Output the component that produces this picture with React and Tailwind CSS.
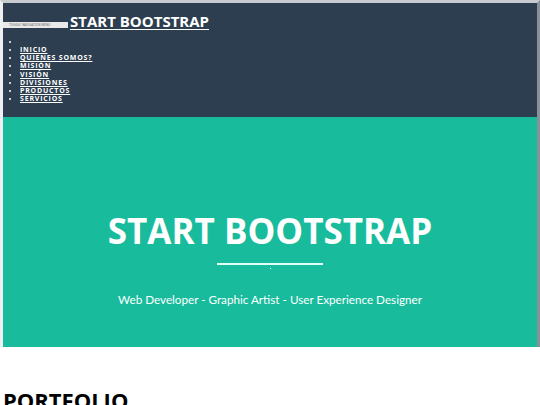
import React from "react";

const links = ["Inicio", "Quienes somos?", "Misión", "Visión", "Divisiones", "Productos", "Servicios"];

export default function App() {
  const heading = { fontFamily: '"Open Sans", "Noto Sans", sans-serif' };

  return (
    <div className="min-h-screen bg-white">
      <div className="border-t-[3px] border-l-[3px] border-r-[3px] border-t-[#c8cbcf] border-l-[#eef0f2] border-r-[#8a9099]">
        <nav className="h-[114px] bg-[#2c3e50] text-white" style={heading}>
          <div className="flex items-end pt-[11px]">
            <button className="mb-[1px] h-[6px] w-[65px] overflow-hidden bg-[#e9e9e9] px-[6px] text-left text-[3px] leading-[6px] tracking-wide text-[#555] uppercase">
              Toggle navigation menu
            </button>
            <a href="#" className="ml-[2px] text-[15px] font-bold leading-none text-white underline underline-offset-2">
              START BOOTSTRAP
            </a>
          </div>
          <ul className="mt-[9px] list-disc pl-[17px] text-[7px] font-bold uppercase leading-[8.2px] tracking-[0.8px] marker:text-[6px]">
            <li className="h-[8px]"></li>
            {links.map((l) => (
              <li key={l}>
                <a href="#" className="underline underline-offset-1">{l}</a>
              </li>
            ))}
          </ul>
        </nav>
        <header className="flex h-[230px] flex-col items-center bg-[#18bc9c] pt-[96px] text-white">
          <h1 className="text-[35px] font-bold leading-none" style={heading}>
            START BOOTSTRAP
          </h1>
          <div className="relative mt-[15px] h-[2px] w-[106px] bg-[#e6fff9]">
            <span className="absolute left-[53px] top-[5px] h-[1px] w-[1px] bg-[#e6fff9]"></span>
          </div>
          <p className="mt-[29px] text-[11.7px] leading-none" style={{ fontFamily: 'Lato, "Open Sans", sans-serif' }}>
            Web Developer - Graphic Artist - User Experience Designer
          </p>
        </header>
      </div>
      <section className="px-[3px] pt-[42px]">
        <h2 className="text-[22px] font-bold leading-none text-black" style={heading}>PORTFOLIO</h2>
      </section>
    </div>
  );
}
